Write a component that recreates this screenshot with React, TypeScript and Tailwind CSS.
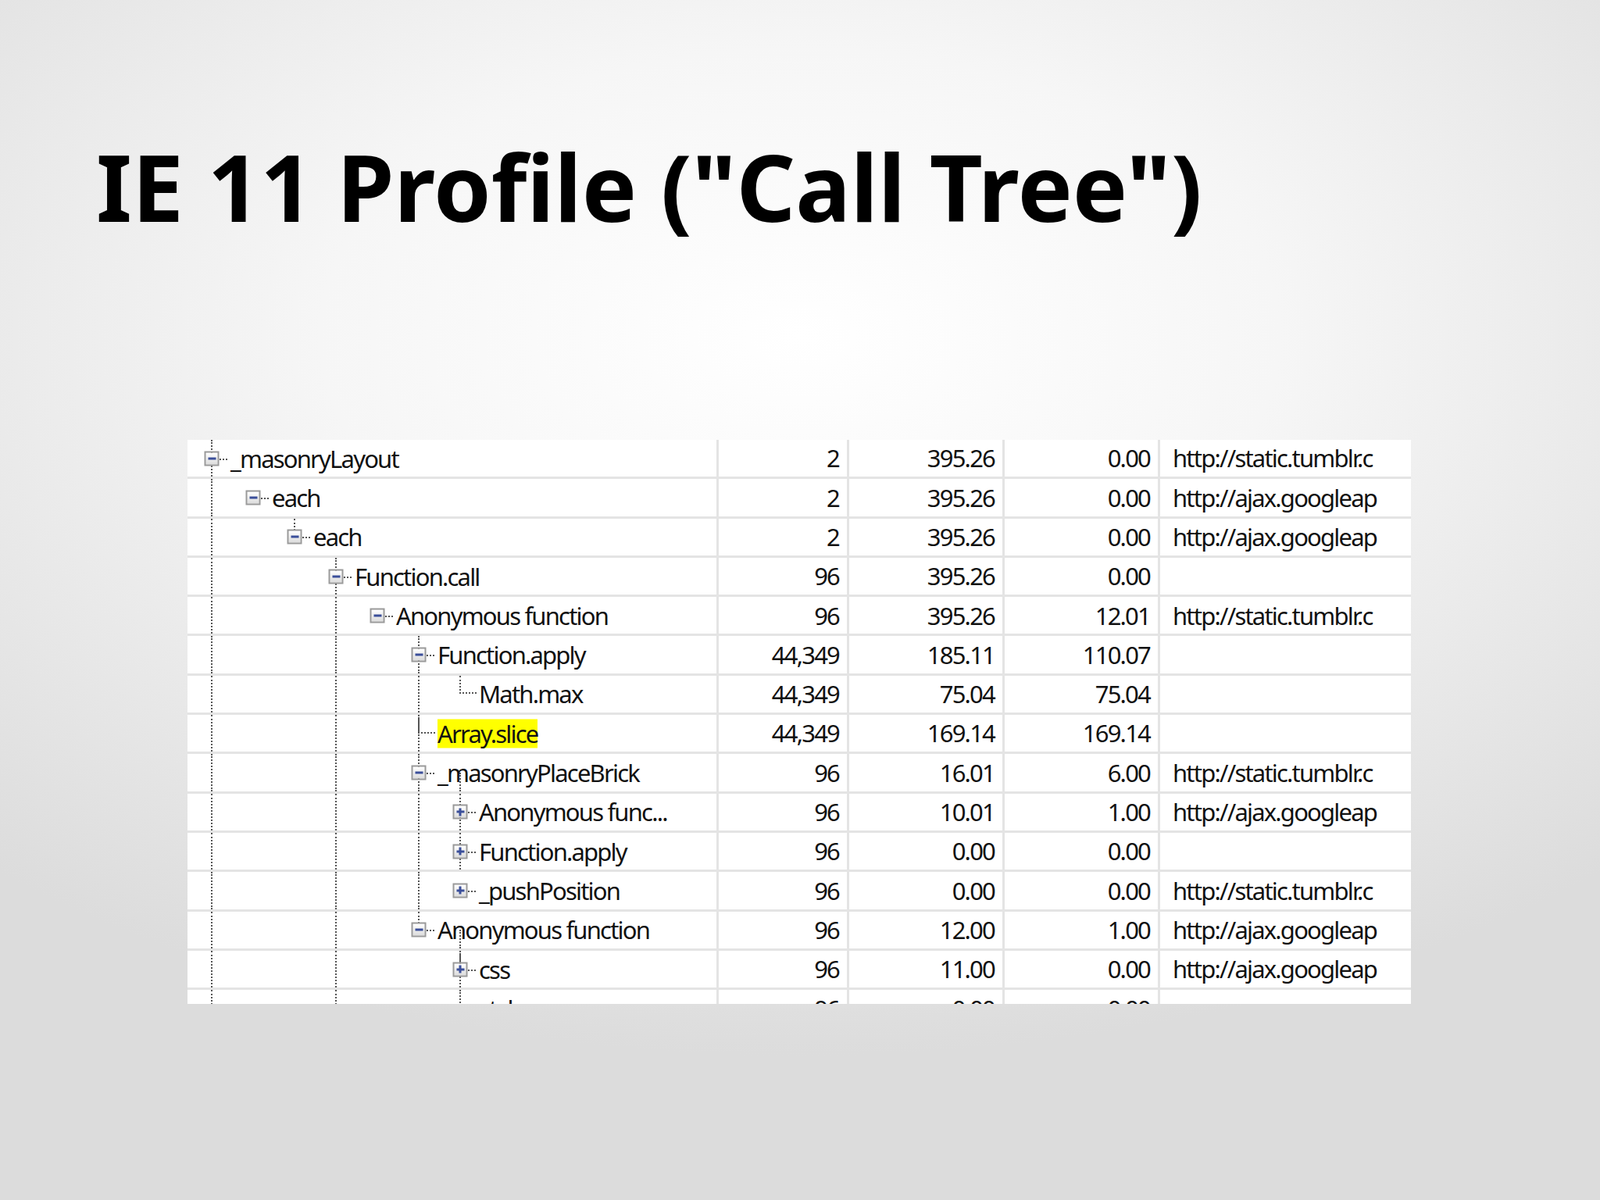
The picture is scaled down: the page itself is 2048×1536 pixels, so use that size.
import React from 'react';

type Row = {
  name: string;
  level: number;
  kind: 'minus' | 'plus' | 'leaf';
  calls: string;
  incl: string;
  excl: string;
  url: string;
  hl?: boolean;
  // levels with a dotted line running the full row height
  full: number[];
  // levels with a dotted line in the bottom half only
  bottom: number[];
};

const rows: Row[] = [
  { name: '_masonryLayout', level: 0, kind: 'minus', calls: '2', incl: '395.26', excl: '0.00', url: 'http://static.tumblr.c', full: [], bottom: [0] },
  { name: 'each', level: 1, kind: 'minus', calls: '2', incl: '395.26', excl: '0.00', url: 'http://ajax.googleap', full: [0], bottom: [] },
  { name: 'each', level: 2, kind: 'minus', calls: '2', incl: '395.26', excl: '0.00', url: 'http://ajax.googleap', full: [0], bottom: [] },
  { name: 'Function.call', level: 3, kind: 'minus', calls: '96', incl: '395.26', excl: '0.00', url: '', full: [0], bottom: [3] },
  { name: 'Anonymous function', level: 4, kind: 'minus', calls: '96', incl: '395.26', excl: '12.01', url: 'http://static.tumblr.c', full: [0, 3], bottom: [] },
  { name: 'Function.apply', level: 5, kind: 'minus', calls: '44,349', incl: '185.11', excl: '110.07', url: '', full: [0, 3], bottom: [5] },
  { name: 'Math.max', level: 6, kind: 'leaf', calls: '44,349', incl: '75.04', excl: '75.04', url: '', full: [0, 3, 5], bottom: [] },
  { name: 'Array.slice', level: 5, kind: 'leaf', calls: '44,349', incl: '169.14', excl: '169.14', url: '', hl: true, full: [0, 3, 5], bottom: [] },
  { name: '_masonryPlaceBrick', level: 5, kind: 'minus', calls: '96', incl: '16.01', excl: '6.00', url: 'http://static.tumblr.c', full: [0, 3, 5], bottom: [6] },
  { name: 'Anonymous func...', level: 6, kind: 'plus', calls: '96', incl: '10.01', excl: '1.00', url: 'http://ajax.googleap', full: [0, 3, 5, 6], bottom: [] },
  { name: 'Function.apply', level: 6, kind: 'plus', calls: '96', incl: '0.00', excl: '0.00', url: '', full: [0, 3, 5, 6], bottom: [] },
  { name: '_pushPosition', level: 6, kind: 'plus', calls: '96', incl: '0.00', excl: '0.00', url: 'http://static.tumblr.c', full: [0, 3, 5], bottom: [] },
  { name: 'Anonymous function', level: 5, kind: 'minus', calls: '96', incl: '12.00', excl: '1.00', url: 'http://ajax.googleap', full: [0, 3], bottom: [6] },
  { name: 'css', level: 6, kind: 'plus', calls: '96', incl: '11.00', excl: '0.00', url: 'http://ajax.googleap', full: [0, 3, 6], bottom: [] },
  { name: 'style', level: 6, kind: 'leaf', calls: '96', incl: '0.00', excl: '0.00', url: '', full: [0, 3], bottom: [] },
];

const INDENT = 53;
const X0 = 31;

function Box({ plus }: { plus: boolean }) {
  return (
    <span className="absolute top-1/2 -translate-x-1/2 -translate-y-1/2 w-[19px] h-[19px] border-2 border-[#9a9a9a] bg-gradient-to-b from-white to-[#dcdcdc] flex items-center justify-center">
      <span className="absolute w-[10px] h-[3px] bg-[#3b4f9a]" />
      {plus && <span className="absolute w-[3px] h-[10px] bg-[#3b4f9a]" />}
    </span>
  );
}

// tree lines and boxes are a drawing, so they are placed by offsets
function TreeCell({ r, first }: { r: Row; first: boolean }) {
  const x = X0 + INDENT * r.level;
  return (
    <div className="relative h-full">
      {r.full.map((l) => (
        <span key={'f' + l} className="absolute top-0 bottom-0 border-l-2 border-dotted border-[#555]" style={{ left: X0 + INDENT * l - 1 }} />
      ))}
      {r.bottom.map((l) => (
        <span key={'b' + l} className="absolute top-1/2 bottom-0 border-l-2 border-dotted border-[#555]" style={{ left: X0 + INDENT * l - 1 }} />
      ))}
      {(first || (r.level > 0 && !r.full.includes(r.level - 1) && r.kind !== 'leaf')) && (
        <span className="absolute top-0 h-1/2 border-l-2 border-dotted border-[#555]" style={{ left: x - 1 }} />
      )}
      {r.kind === 'leaf' ? (
        <span
          className="absolute top-0 h-1/2 border-l-2 border-b-2 border-dotted border-[#555]"
          style={{ left: x - 1, width: 22 }}
        />
      ) : (
        <span className="absolute top-1/2 h-0 border-t-2 border-dotted border-[#555]" style={{ left: x + 10, width: 10 }} />
      )}
      {r.kind !== 'leaf' && (
        <span className="absolute top-0 bottom-0" style={{ left: x }}>
          <Box plus={r.kind === 'plus'} />
        </span>
      )}
      <span
        className={`absolute top-1/2 -translate-y-1/2 whitespace-nowrap leading-none ${r.hl ? 'bg-[#ffff00] py-[3px]' : ''}`}
        style={{ left: x + 24 }}
      >
        {r.name}
      </span>
    </div>
  );
}

export default function App() {
  return (
    <div className="w-[2048px] h-[1536px] overflow-hidden bg-[radial-gradient(ellipse_75%_60%_at_50%_28%,#ffffff_0%,#f6f6f6_40%,#dcdcdc_100%)]">
      <h1 className="pl-[123px] pt-[180px] text-[118px] leading-none font-bold text-black [font-family:'Liberation_Sans',Arial,sans-serif]">
        IE 11 Profile ("Call Tree")
      </h1>
      <div className="ml-[240px] mt-[265px] w-[1566px] h-[722px] overflow-hidden bg-white [font-family:'Open_Sans','Noto_Sans',sans-serif] text-[31px] tracking-[-1.8px] text-[#111]">
        {rows.map((r, i) => (
          <div key={i} className="grid grid-cols-[680px_167px_199px_199px_321px] h-[50.3px] border-b-[3px] border-[#e4e4e4]">
            <div className="border-r-[3px] border-[#e4e4e4]">
              <TreeCell r={r} first={i === 0} />
            </div>
            <div className="border-r-[3px] border-[#e4e4e4] flex items-center justify-end pr-[10px]">{r.calls}</div>
            <div className="border-r-[3px] border-[#e4e4e4] flex items-center justify-end pr-[10px]">{r.incl}</div>
            <div className="border-r-[3px] border-[#e4e4e4] flex items-center justify-end pr-[10px]">{r.excl}</div>
            <div className="flex items-center pl-[16px] whitespace-nowrap overflow-hidden">{r.url}</div>
          </div>
        ))}
      </div>
    </div>
  );
}
